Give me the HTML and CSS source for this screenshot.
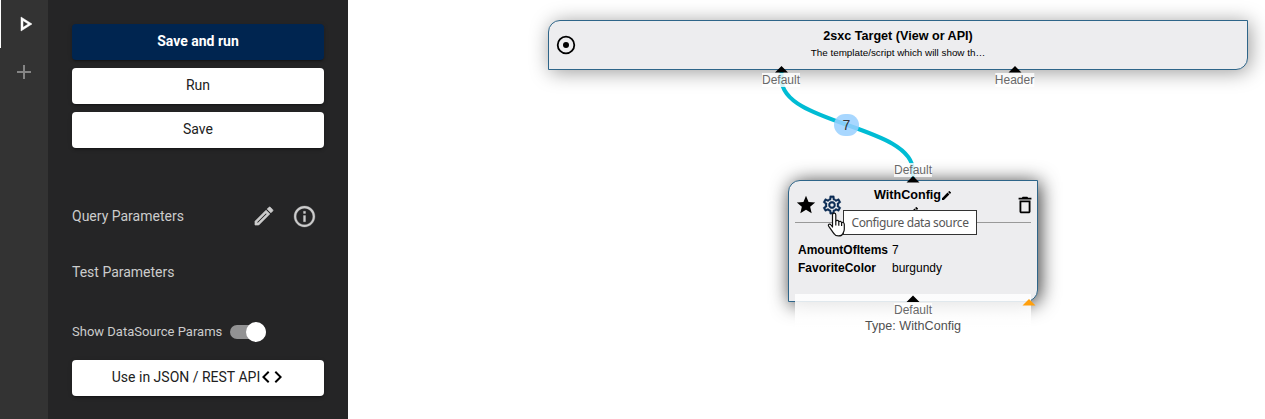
FILE: index.html
```html
<!DOCTYPE html>
<html lang="en">
<head>
<meta charset="utf-8">
<title>Query Designer</title>
<link rel="stylesheet" href="styles.css">
</head>
<body>
<div class="app">
  <nav class="rail">
    <button class="rail-item active" aria-label="Run"><svg width="24" height="24" viewBox="0 0 24 24"><path d="M10 8.64 15.27 12 10 15.36V8.64M8 5v14l11-7L8 5z"/></svg></button>
    <button class="rail-item" aria-label="Add"><svg width="24" height="24" viewBox="0 0 24 24"><path d="M19 13h-6v6h-2v-6H5v-2h6V5h2v6h6v2z"/></svg></button>
  </nav>
  <aside class="panel">
    <div class="actions">
      <button class="btn primary">Save and run</button>
      <button class="btn">Run</button>
      <button class="btn">Save</button>
    </div>
    <div class="row">
      <span class="label">Query Parameters</span>
      <span class="row-icons">
        <svg width="24" height="24" viewBox="0 0 24 24"><path stroke="#ccc" stroke-width=".7" d="M14.06 9.02l.92.92L5.92 19H5v-.92l9.06-9.06M17.66 3c-.25 0-.51.1-.7.29l-1.83 1.83 3.75 3.75 1.83-1.83c.39-.39.39-1.02 0-1.41l-2.34-2.34c-.2-.2-.45-.29-.71-.29zm-3.6 3.19L3 17.25V21h3.75L17.81 9.94l-3.75-3.75z"/></svg>
        <svg width="25" height="25" viewBox="0 0 24 24"><path stroke="#ccc" stroke-width=".3" d="M11 7h2v2h-2zm0 4h2v6h-2zm1-9C6.48 2 2 6.48 2 12s4.48 10 10 10 10-4.48 10-10S17.52 2 12 2zm0 18c-4.41 0-8-3.59-8-8s3.59-8 8-8 8 3.59 8 8-3.59 8-8 8z"/></svg>
      </span>
    </div>
    <div class="row test"><span class="label">Test Parameters</span></div>
    <div class="switch-row"><span class="switch-label">Show DataSource Params</span><span class="switch"><span class="thumb"></span></span></div>
    <button class="btn json"><span>Use in JSON / REST API</span><svg width="24" height="24" viewBox="0 0 24 24"><path d="M9.4 16.6 4.8 12l4.6-4.6L8 6l-6 6 6 6 1.400-1.400zm5.200 0 4.600-4.600-4.600-4.600L16 6l6 6-6 6-1.400-1.400z"/></svg></button>
  </aside>
  <main class="canvas">
    <section class="node target">
      <svg class="target-icon" width="24" height="24" viewBox="0 0 24 24"><circle cx="12" cy="12" r="8.300" fill="none" stroke="#000" stroke-width="1.800"/><circle cx="12" cy="12" r="3"/></svg>
      <div class="target-text"><div class="title">2sxc Target (View or API)</div><div class="desc">The template/script which will show th…</div></div>
    </section>
    <section class="node source">
      <header class="source-head">
        <svg class="star" width="22" height="22" viewBox="0 0 24 24"><path d="M12 17.27 18.18 21l-1.64-7.03L22 9.24l-7.19-.61L12 2 9.19 8.63 2 9.24l5.46 4.73L5.82 21z"/></svg>
        <svg class="gear" width="22" height="22" viewBox="0 0 24 24"><path d="M19.43 12.98c.04-.32.07-.64.07-.98 0-.34-.03-.66-.07-.98l2.11-1.65c.19-.15.24-.42.12-.64l-2-3.46c-.09-.16-.26-.25-.44-.25-.06 0-.12.01-.17.03l-2.49 1c-.52-.4-1.08-.73-1.69-.98l-.38-2.65C14.46 2.18 14.25 2 14 2h-4c-.25 0-.46.18-.49.42l-.38 2.65c-.61.25-1.17.59-1.69.98l-2.49-1c-.06-.02-.12-.03-.18-.03-.17 0-.34.09-.43.25l-2 3.46c-.13.22-.07.49.12.64l2.11 1.65c-.04.32-.07.65-.07.98 0 .33.03.66.07.98l-2.11 1.65c-.19.15-.24.42-.12.64l2 3.46c.09.16.26.25.44.25.06 0 .12-.01.17-.03l2.49-1c.52.4 1.08.73 1.69.98l.38 2.65c.03.24.24.42.49.42h4c.25 0 .46-.18.49-.42l.38-2.65c.61-.25 1.17-.59 1.69-.98l2.49 1c.06.02.12.03.18.03.17 0 .34-.09.43-.25l2-3.46c.12-.22.07-.49-.12-.64l-2.11-1.65zm-1.98-1.71c.04.31.05.52.05.73 0 .21-.02.43-.05.73l-.14 1.13.89.7 1.08.84-.7 1.21-1.27-.51-1.04-.42-.9.68c-.43.32-.84.56-1.25.73l-1.06.43-.16 1.13-.2 1.35h-1.4l-.19-1.35-.16-1.13-1.06-.43c-.43-.18-.83-.41-1.23-.71l-.91-.7-1.06.43-1.27.51-.7-1.21 1.08-.84.89-.7-.14-1.13c-.03-.31-.05-.54-.05-.74s.02-.43.05-.73l.14-1.13-.89-.7-1.08-.84.7-1.21 1.27.51 1.04.42.9-.68c.43-.32.84-.56 1.25-.73l1.06-.43.16-1.13.2-1.35h1.39l.19 1.35.16 1.13 1.06.43c.43.18.83.41 1.23.71l.91.7 1.06-.43 1.27-.51.7 1.21-1.07.85-.89.7.14 1.13zM12 8c-2.21 0-4 1.79-4 4s1.79 4 4 4 4-1.79 4-4-1.79-4-4-4zm0 6c-1.1 0-2-.9-2-2s.9-2 2-2 2 .9 2 2-.9 2-2 2z"/></svg>
        <div class="source-title"><div class="title-line"><span>WithConfig</span><svg width="9" height="9" viewBox="3 3 18 18"><path d="M3 17.25V21h3.75L17.81 9.94l-3.75-3.75L3 17.25zM20.71 7.04a1 1 0 0 0 0-1.41l-2.34-2.34a1 1 0 0 0-1.41 0l-1.83 1.83 3.75 3.75 1.83-1.83z"/></svg></div><svg class="desc-pencil" width="9" height="9" viewBox="3 3 18 18"><path d="M3 17.25V21h3.75L17.81 9.94l-3.75-3.75L3 17.25zM20.71 7.04a1 1 0 0 0 0-1.41l-2.34-2.34a1 1 0 0 0-1.41 0l-1.83 1.83 3.75 3.75 1.83-1.83z"/></svg></div>
        <svg class="trash" width="22" height="22" viewBox="0 0 24 24"><path d="M6 19c0 1.1.9 2 2 2h8c1.100 0 2-.9 2-2V7H6v12zM8 9h8v10H8V9zm7.500-5-1-1h-5l-1 1H5v2h14V4h-3.500z"/></svg>
      </header>
      <dl class="config"><dt>AmountOfItems</dt><dd>7</dd><dt>FavoriteColor</dt><dd>burgundy</dd></dl>
    </section>
    <div class="type-strip">Type: WithConfig</div>
    <svg class="wires" width="917" height="419" viewBox="348 0 917 419">
      <path class="wire" d="M781.500 72V79C781.500 125 913 125 913 171V178"/>
    </svg>
    <span class="port out-default">Default</span>
    <span class="port out-header">Header</span>
    <span class="port in-default">Default</span>
    <span class="port src-default">Default</span>
    <span class="count">7</span>
    <svg class="wires" width="917" height="419" viewBox="348 0 917 419">
      <path d="M775 72.500 781.500 66l6.500 6.500zM1008.500 72.500 1015 66l6.500 6.500zM906.500 182.500l6.500-6.500 6.500 6.500zM906.500 302l6.500-6.500 6.500 6.500z"/>
      <path fill="#ff9f0c" d="M1022.500 305.500 1029 299l6.500 6.500z"/>
    </svg>
    <div class="tooltip">Configure data source</div>
    <svg class="pointer" width="20" height="26" viewBox="0 0 20 26"><path d="M5.500 15V3c0-2.400 3.300-2.400 3.300 0v6c.7-1 2.700-.8 3 .7.800-.8 2.500-.4 2.800 1 .8-.7 2.700-.2 2.700 1.700v4.800c0 2-.8 3-1.500 4.500-1 2.900-7 3-8.500.3-1.800-2-3.600-5.200-5.500-7.600C.4 12.400 2.800 11.200 4 13z"/><path d="M8.800 9v4.500M11.800 9.700v4M14.600 10.700v3.300"/></svg>
  </main>
</div>
</body>
</html>
```
FILE: styles.css
```css
* { box-sizing: border-box; }
body { margin: 0; overflow: hidden; background: #fff; }
button { border: 0; padding: 0; font: inherit; }
svg { display: block; flex: none; }
.app { display: flex; height: 419px; font-family: Roboto, sans-serif; }
.rail { width: 48px; background: #333; }
.rail-item { display: flex; align-items: center; justify-content: center; width: 48px; height: 48px; background: none; fill: #858585; }
.rail-item.active { border-left: 1px solid #fff; fill: #fff; stroke: #fff; stroke-width: .5; }
.panel { width: 300px; padding: 24px 24px 0; background: #252526; color: #ccc; }
.actions { display: grid; gap: 8px; }
.btn { display: flex; align-items: center; justify-content: center; width: 252px; height: 36px; padding-bottom: 2px; border-radius: 4px; background: #fff; color: #212121; font-size: 14px; box-shadow: 0 3px 1px -2px rgba(0,0,0,.2), 0 2px 2px rgba(0,0,0,.14), 0 1px 5px rgba(0,0,0,.12); }
.btn.primary { background: #002550; color: #fff; font-weight: 700; }
.row { display: flex; align-items: center; justify-content: space-between; height: 40px; margin-top: 48px; }
.row.test { margin-top: 16px; }
.label { font-size: 14px; }
.row-icons { display: flex; gap: 16px; padding-right: 7px; fill: #ccc; }
.switch-row { display: flex; align-items: center; gap: 8px; height: 20px; margin-top: 30px; }
.switch-label { font-size: 13px; padding-bottom: 2px; }
.switch { display: flex; align-items: center; justify-content: flex-end; width: 36px; height: 14px; border-radius: 7px; background: #929293; }
.thumb { width: 20px; height: 20px; flex: none; border-radius: 50%; background: #fff; }
.json { margin-top: 18px; }
.canvas { position: relative; width: 917px; overflow: hidden; font-family: "Liberation Sans", Arial, sans-serif; color: #000; }
.node { position: absolute; border: 1px solid #2e6589; border-radius: 12px 0; background: #ededef; }
.target { left: 200px; top: 20px; width: 700px; height: 50px; display: flex; align-items: center; box-shadow: 2px 2px 20px rgba(0,0,0,.4); }
.target-icon { margin-left: 5px; }
.target-text { flex: 1; padding: 0 29px 3px 0; text-align: center; }
.title { font-size: 12.600px; font-weight: 700; line-height: 17px; }
.desc { font-size: 9.850px; line-height: 15px; }
.source { left: 440px; top: 180px; width: 250px; height: 122px; padding: 0 6px; box-shadow: 2px 2px 19px rgba(0,0,0,.8); }
.source-head { display: flex; height: 42px; padding-top: 12px; border-bottom: 1px solid #999; }
.star { margin: 1px 0 0; }
.gear { margin: 1px 0 0 4px; fill: #0c2c54; stroke: #0c2c54; stroke-width: .3; }
.source-title { flex: 1; margin: -6px 0 0 31px; }
.title-line { display: flex; align-items: center; gap: 1px; font-size: 12.600px; font-weight: 700; line-height: 17px; }
.desc-pencil { margin: 3px 0 0 35px; }
.trash { margin: 1px -5px 0 0; }
.config { display: grid; grid-template-columns: 94px 1fr; margin: 18px 0 0 3px; font-size: 12px; line-height: 18px; }
.config dt { font-weight: 700; }
.config dd { margin: 0; }
.type-strip { position: absolute; left: 447px; top: 294px; width: 236px; height: 44px; padding-top: 24px; background: linear-gradient(rgba(255,255,255,.85) 65%, transparent); color: #505050; text-align: center; font-size: 12.600px; line-height: 16px; }
.wires { position: absolute; left: 0; top: 0; }
.wire { fill: none; stroke: #00bcd4; stroke-width: 4; }
.port { position: absolute; height: 14px; background: rgba(255,255,255,.8); color: #696969; font-size: 12px; line-height: 14px; white-space: nowrap; transform: translateX(-50%); }
.out-default { left: 433px; top: 73px; }
.out-header { left: 666.500px; top: 73px; }
.in-default { left: 565px; top: 163px; }
.src-default { left: 565px; top: 303px; }
.count { position: absolute; left: 486px; top: 114px; width: 25px; height: 22px; border-radius: 11px; background: rgba(153,208,255,.85); color: #333; font-size: 14px; line-height: 22px; text-align: center; }
.tooltip { position: absolute; left: 495px; top: 210px; width: 134px; height: 25px; border: 1px solid #333; background: #fff; color: #575757; font: 12px/24px "Noto Sans", sans-serif; letter-spacing: -.37px; text-align: center; white-space: nowrap; }
.pointer { position: absolute; left: 479px; top: 212px; fill: #fff; stroke: #111; stroke-width: 1.200; stroke-linejoin: round; }
```
